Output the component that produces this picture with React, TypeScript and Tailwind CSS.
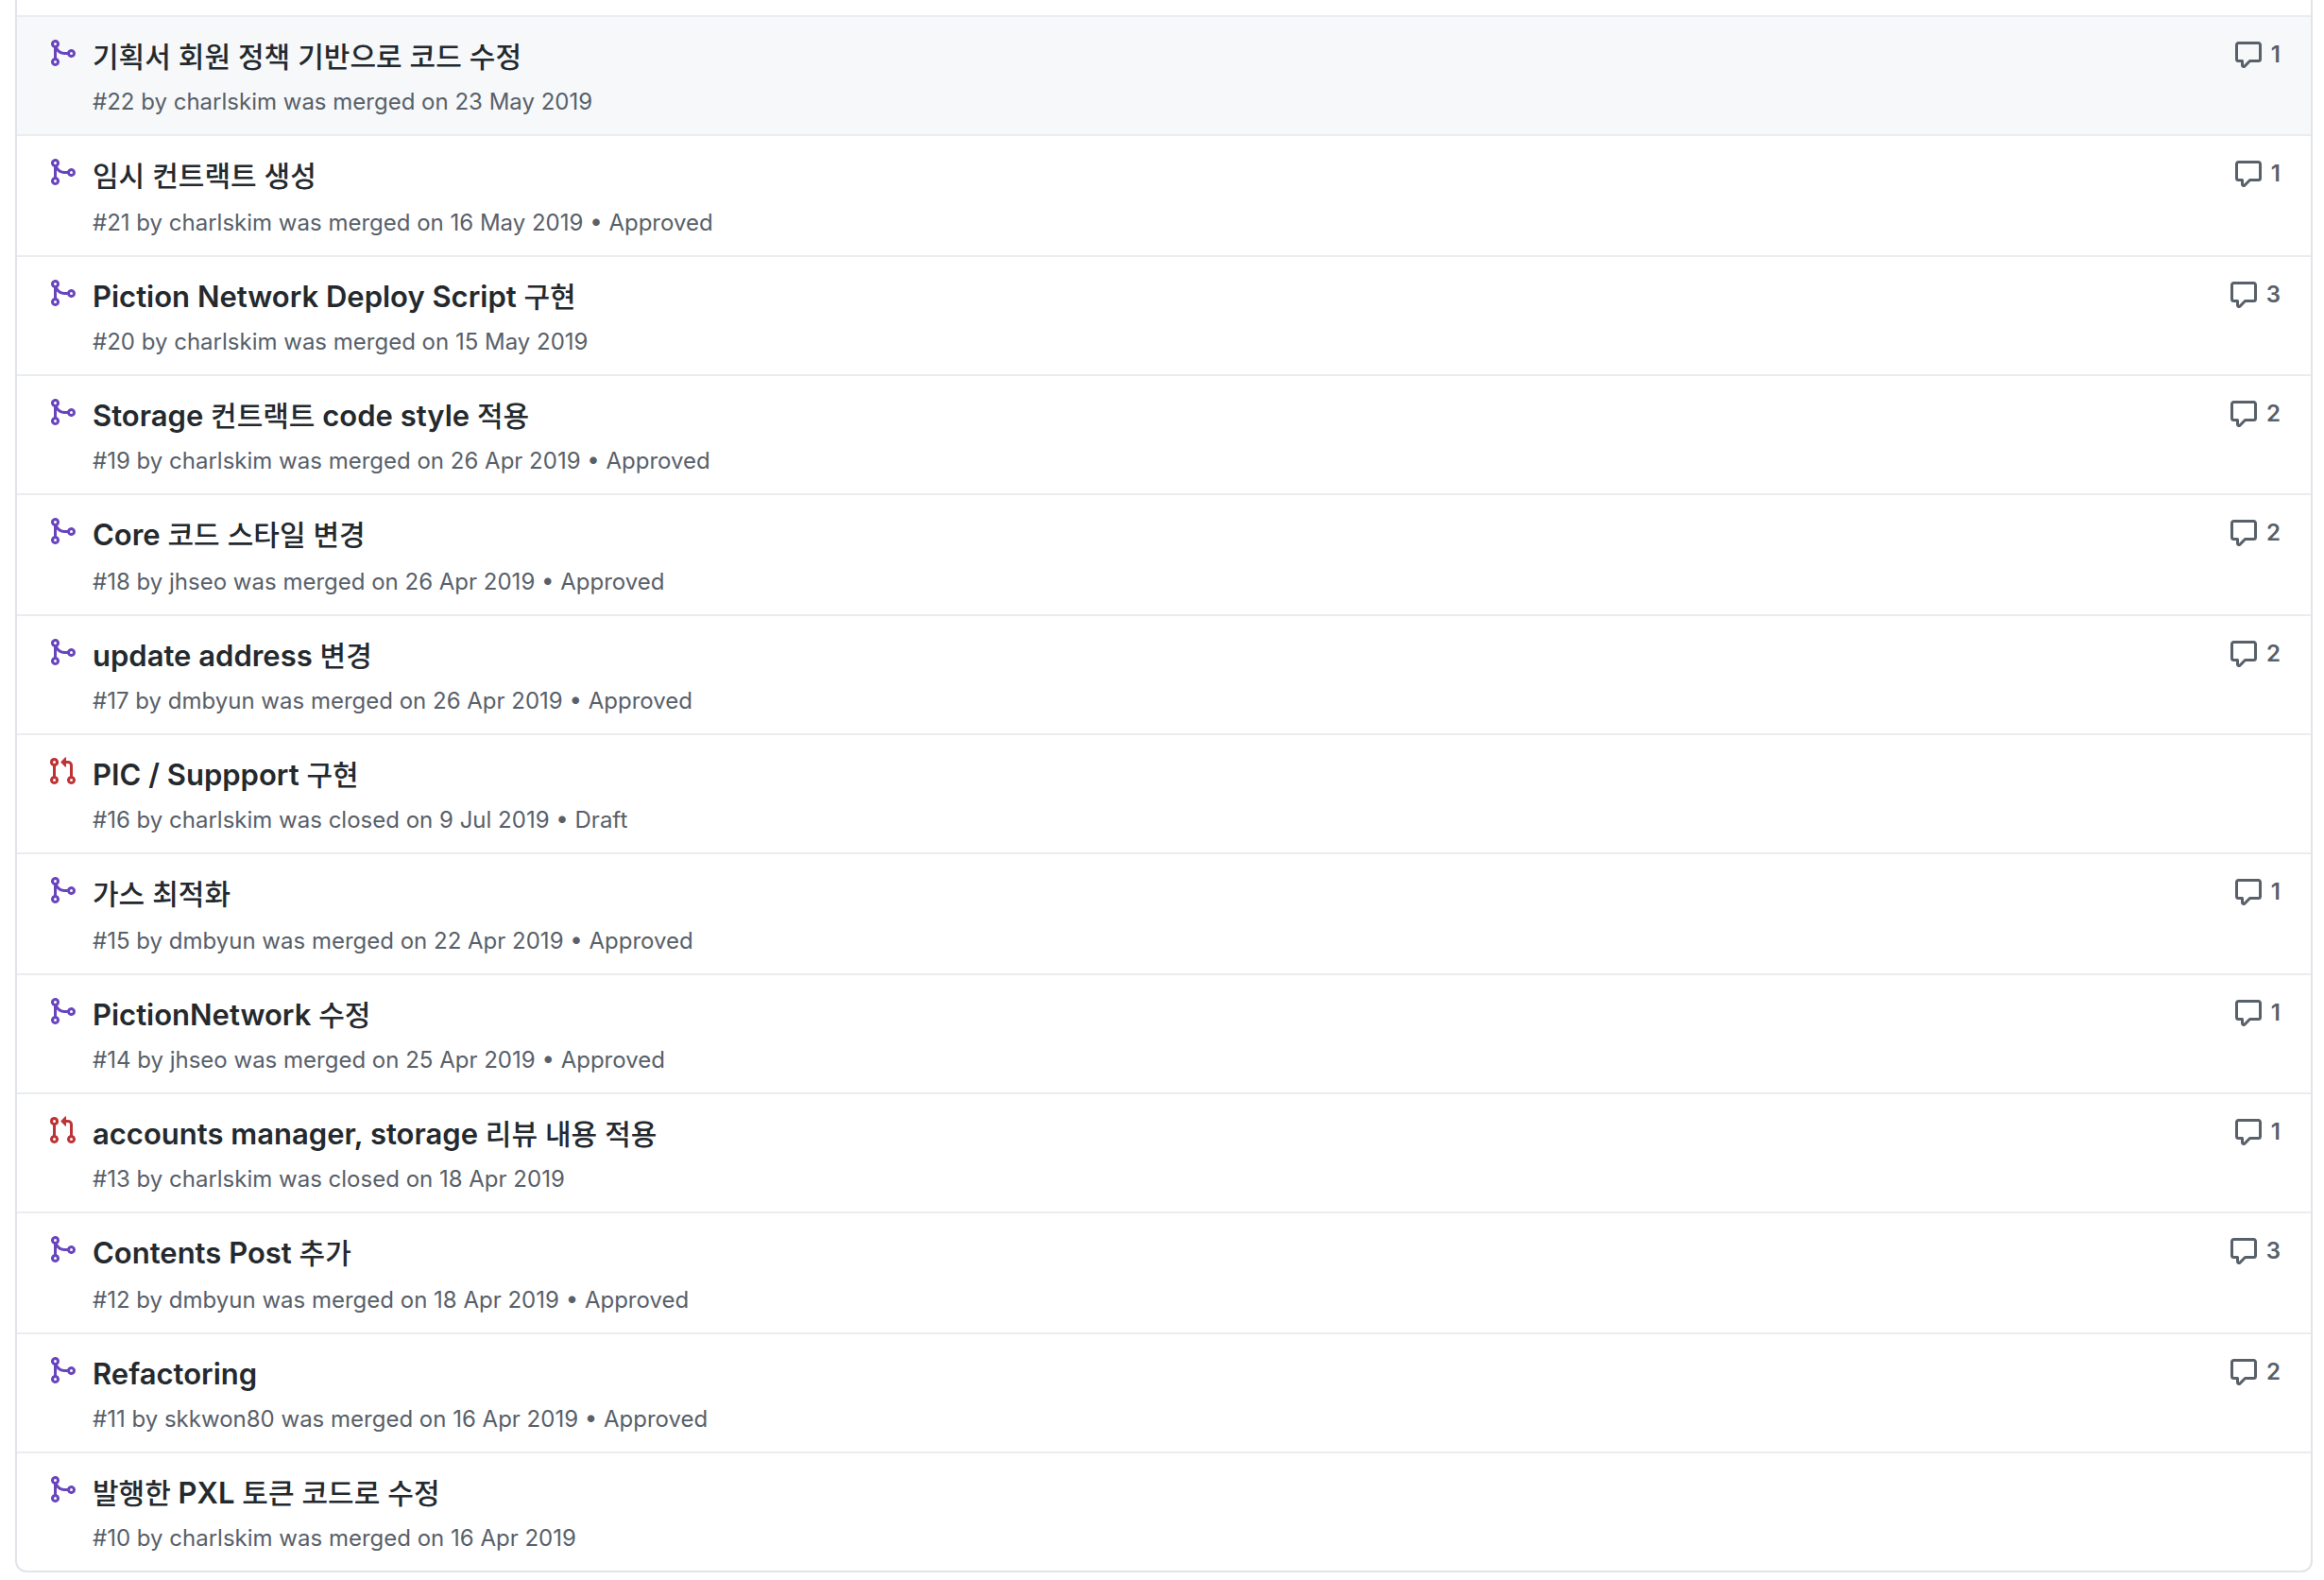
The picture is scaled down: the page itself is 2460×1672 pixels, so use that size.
interface PullRequest {
  id: number;
  title: string;
  author: string;
  state: "merged" | "closed";
  date: string;
  note?: string;
  comments?: number;
}

const pullRequests: PullRequest[] = [
  { id: 22, title: "기획서 회원 정책 기반으로 코드 수정", author: "charlskim", state: "merged", date: "23 May 2019", comments: 1 },
  { id: 21, title: "임시 컨트랙트 생성", author: "charlskim", state: "merged", date: "16 May 2019", note: "Approved", comments: 1 },
  { id: 20, title: "Piction Network Deploy Script 구현", author: "charlskim", state: "merged", date: "15 May 2019", comments: 3 },
  { id: 19, title: "Storage 컨트랙트 code style 적용", author: "charlskim", state: "merged", date: "26 Apr 2019", note: "Approved", comments: 2 },
  { id: 18, title: "Core 코드 스타일 변경", author: "jhseo", state: "merged", date: "26 Apr 2019", note: "Approved", comments: 2 },
  { id: 17, title: "update address 변경", author: "dmbyun", state: "merged", date: "26 Apr 2019", note: "Approved", comments: 2 },
  { id: 16, title: "PIC / Suppport 구현", author: "charlskim", state: "closed", date: "9 Jul 2019", note: "Draft" },
  { id: 15, title: "가스 최적화", author: "dmbyun", state: "merged", date: "22 Apr 2019", note: "Approved", comments: 1 },
  { id: 14, title: "PictionNetwork 수정", author: "jhseo", state: "merged", date: "25 Apr 2019", note: "Approved", comments: 1 },
  { id: 13, title: "accounts manager, storage 리뷰 내용 적용", author: "charlskim", state: "closed", date: "18 Apr 2019", comments: 1 },
  { id: 12, title: "Contents Post 추가", author: "dmbyun", state: "merged", date: "18 Apr 2019", note: "Approved", comments: 3 },
  { id: 11, title: "Refactoring", author: "skkwon80", state: "merged", date: "16 Apr 2019", note: "Approved", comments: 2 },
  { id: 10, title: "발행한 PXL 토큰 코드로 수정", author: "charlskim", state: "merged", date: "16 Apr 2019" },
];

function MergeIcon() {
  return (
    <svg viewBox="0 0 16 16" className="size-8 fill-[#6845bd]" aria-label="Merged pull request">
      <path
        fillRule="evenodd"
        d="M5 3.254V3.25v.005a.75.75 0 110-.005v.004zm.45 1.9a2.25 2.25 0 10-1.95.218v5.256a2.25 2.25 0 101.5 0V7.123A5.735 5.735 0 009.25 9h1.378a2.251 2.251 0 100-1.5H9.25a4.25 4.25 0 01-3.8-2.346zM12.75 9a.75.75 0 100-1.5.75.75 0 000 1.5zm-8.5 4.5a.75.75 0 100-1.5.75.75 0 000 1.5z"
      />
    </svg>
  );
}

function PullRequestIcon() {
  return (
    <svg viewBox="0 0 16 16" className="size-8 fill-[#bd3437]" aria-label="Closed pull request">
      <path
        fillRule="evenodd"
        d="M7.177 3.073L9.573.677A.25.25 0 0110 .854v4.792a.25.25 0 01-.427.177L7.177 3.427a.25.25 0 010-.354zM3.75 2.5a.75.75 0 100 1.5.75.75 0 000-1.5zm-2.25.75a2.25 2.25 0 113 2.122v5.256a2.251 2.251 0 11-1.5 0V5.372A2.25 2.25 0 011.5 3.25zM11 2.5h-1V4h1a1 1 0 011 1v5.628a2.251 2.251 0 101.5 0V5A2.5 2.5 0 0011 2.5zm1 10.25a.75.75 0 111.5 0 .75.75 0 01-1.5 0zM3.75 12a.75.75 0 100 1.5.75.75 0 000-1.5z"
      />
    </svg>
  );
}

function CommentIcon() {
  return (
    <svg viewBox="0 0 16 16" className="size-8 fill-current" aria-hidden="true">
      <path
        fillRule="evenodd"
        d="M2.75 2.5a.25.25 0 00-.25.25v7.5c0 .138.112.25.25.25h2a.75.75 0 01.75.75v2.19l2.72-2.72a.75.75 0 01.53-.22h4.5a.25.25 0 00.25-.25v-7.5a.25.25 0 00-.25-.25H2.75zM1 2.75C1 1.784 1.784 1 2.75 1h10.5c.966 0 1.75.784 1.75 1.75v7.5A1.75 1.75 0 0113.25 12H9.06l-2.573 2.573A1.457 1.457 0 014 13.543V12H2.75A1.75 1.75 0 011 10.25v-7.5z"
      />
    </svg>
  );
}

// Hangul glyphs run larger and heavier than the Latin ones, so those words are set a step down
function Title({ text }: { text: string }) {
  return (
    <>
      {text.split(/([가-힣]+(?: [가-힣]+)*)/).map((part, i) =>
        i % 2 ? (
          <span key={i} className="text-[30px] font-medium">
            {part}
          </span>
        ) : (
          part
        )
      )}
    </>
  );
}

function Row({ pr }: { pr: PullRequest }) {
  return (
    <li className="group flex border-t-2 border-[#eaecef] px-8 pt-[22px] pb-4 first:bg-[#f6f8fa]">
      <div className="shrink-0">{pr.state === "merged" ? <MergeIcon /> : <PullRequestIcon />}</div>
      <div className="min-w-0 flex-1 pl-4">
        <a href={`#${pr.id}`} className="block text-[31px] leading-10 font-semibold text-[#24292e]">
          <Title text={pr.title} />
        </a>
        <p className="mt-[10px] text-2xl leading-9 text-[#586069] group-[:nth-child(3n+2)]:mt-3">
          #{pr.id} by {pr.author} was {pr.state} on {pr.date}
          {pr.note && ` • ${pr.note}`}
        </p>
      </div>
      {pr.comments && (
        <a href={`#${pr.id}-comments`} className="flex items-start gap-2 pt-0.5 text-[#586069]">
          <CommentIcon />
          <span className="text-2xl font-semibold">{pr.comments}</span>
        </a>
      )}
    </li>
  );
}

export default function App() {
  return (
    <main className="bg-white px-4 pr-3 font-['Inter','Noto_Sans_CJK_KR',sans-serif]">
      <ul className="rounded-b-xl border-2 border-t-0 border-[#e1e4e8] pt-4">
        {pullRequests.map((pr) => (
          <Row key={pr.id} pr={pr} />
        ))}
      </ul>
    </main>
  );
}
